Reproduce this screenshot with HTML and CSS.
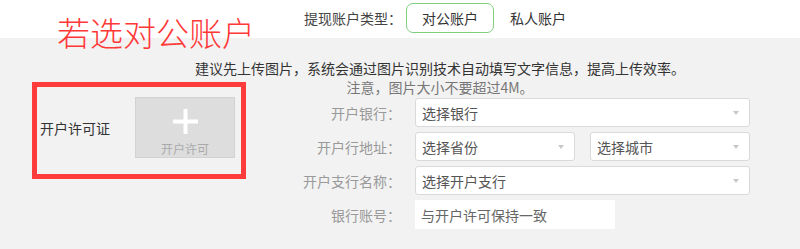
FILE: index.html
```html
<!DOCTYPE html>
<html lang="zh-CN">
<head>
<meta charset="utf-8">
<title>提现账户</title>
<link rel="stylesheet" href="styles.css">
</head>
<body>
<div class="page">
  <div class="note-title">若选对公账户</div>
  <header class="type-bar">
    <span class="type-label">提现账户类型：</span>
    <span class="type-btn active">对公账户</span>
    <span class="type-btn">私人账户</span>
  </header>
  <main class="content">
    <p class="tip tip-main">建议先上传图片，系统会通过图片识别技术自动填写文字信息，提高上传效率。</p>
    <p class="tip tip-sub">注意，图片大小不要超过4M。</p>
    <section class="upload-block">
      <span class="upload-label">开户许可证</span>
      <div class="upload-box">
        <svg class="plus" width="25" height="25" viewBox="0 0 25 25"><rect x="10.5" y="0" width="4" height="25" fill="#fff"/><rect x="0" y="10.5" width="25" height="4" fill="#fff"/></svg>
        <span class="upload-text">开户许可</span>
      </div>
    </section>
    <form class="form">
      <label class="form-label">开户银行：</label>
      <div class="select"><span>选择银行</span><i class="arrow"></i></div>
      <label class="form-label">开户行地址：</label>
      <div class="select-pair">
        <div class="select"><span>选择省份</span><i class="arrow"></i></div>
        <div class="select"><span>选择城市</span><i class="arrow"></i></div>
      </div>
      <label class="form-label">开户支行名称：</label>
      <div class="select"><span>选择开户支行</span><i class="arrow"></i></div>
      <label class="form-label">银行账号：</label>
      <div class="text-input"><span class="placeholder">与开户许可保持一致</span></div>
    </form>
  </main>
</div>
</body>
</html>
```

FILE: styles.css
```css
* { box-sizing: border-box; }
html, body {
  margin: 0;
  padding: 0;
  background: #f2f2f2;
  font-family: "Noto Sans CJK SC", "Liberation Sans", sans-serif;
  font-size: 14px;
  color: #333;
}
.page {
  position: relative;
  width: 800px;
  min-height: 249px;
}
.note-title {
  position: absolute;
  left: 57px;
  top: 16px;
  font-size: 33px;
  line-height: 33px;
  font-weight: 200;
  color: #ff3838;
  white-space: nowrap;
}
.type-bar {
  height: 38px;
  background: #fff;
  display: flex;
  align-items: center;
  padding: 0 0 2px 304px;
}
.type-label {
  width: 102px;
  color: #444;
}
.type-btn {
  height: 30px;
  line-height: 28px;
  padding: 0 14px;
  color: #333;
  border: 1px solid transparent;
  border-radius: 7px;
}
.type-btn.active {
  width: 88px;
  text-align: center;
  border-color: #7fcf7f;
  margin-right: 1px;
}
.content {
  display: grid;
  grid-template-columns: 214px 1fr;
  grid-template-rows: 19px 19px auto;
  padding: 21px 0 20px 32px;
}
.tip {
  margin: 0;
  line-height: 19px;
  text-align: center;
  padding-left: 48px;
  white-space: nowrap;
  grid-column: 1 / -1;
}
.tip-main { grid-row: 1; color: #333; }
.tip-sub { grid-row: 2; color: #777; }
.upload-block {
  grid-column: 1;
  grid-row: 2 / 4;
  align-self: start;
  margin-top: 4px;
  height: 97px;
  border: 5px solid #ff3b3b;
  padding: 10px 6px 16px 3px;
  display: flex;
  align-items: center;
  justify-content: space-between;
}
.upload-label {
  color: #333;
  line-height: 20px;
}
.upload-box {
  width: 100px;
  height: 61px;
  background: #dddddd;
  border: 1px solid #d2d2d2;
  display: flex;
  flex-direction: column;
  align-items: center;
  padding-top: 11px;
}
.plus { display: block; margin-bottom: 8px; }
.upload-text {
  font-size: 12px;
  line-height: 14px;
  color: #aaa;
}
.form {
  grid-column: 2;
  grid-row: 3;
  margin: 1px 0 0;
  display: grid;
  grid-template-columns: 155px 335px;
  column-gap: 14px;
  row-gap: 5px;
  align-items: center;
}
.form-label {
  text-align: right;
  color: #999;
  white-space: nowrap;
  line-height: 20px;
}
.select {
  height: 29px;
  background: #fff;
  border: 1px solid #dadada;
  border-radius: 3px;
  display: flex;
  align-items: center;
  padding: 0 10px 0 6px;
  color: #555;
}
.select span { flex: 1; }
.arrow {
  width: 0;
  height: 0;
  border-left: 3.5px solid transparent;
  border-right: 3.5px solid transparent;
  border-top: 4px solid #c8c8c8;
}
.select-pair {
  display: flex;
  gap: 15px;
}
.select-pair .select { width: 160px; }
.text-input {
  width: 200px;
  height: 29px;
  background: #fff;
  display: flex;
  align-items: center;
  padding-left: 6px;
}
.placeholder { color: #666; }
```
